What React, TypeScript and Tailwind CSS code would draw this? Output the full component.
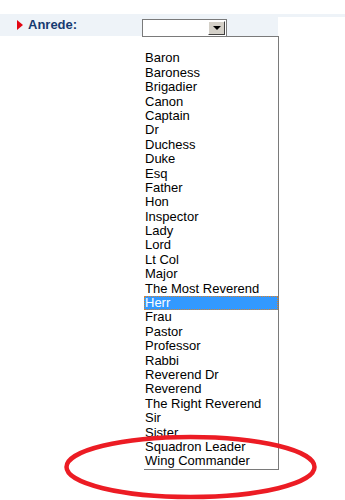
const titles = [
  '',
  'Baron',
  'Baroness',
  'Brigadier',
  'Canon',
  'Captain',
  'Dr',
  'Duchess',
  'Duke',
  'Esq',
  'Father',
  'Hon',
  'Inspector',
  'Lady',
  'Lord',
  'Lt Col',
  'Major',
  'The Most Reverend',
  'Herr',
  'Frau',
  'Pastor',
  'Professor',
  'Rabbi',
  'Reverend Dr',
  'Reverend',
  'The Right Reverend',
  'Sir',
  'Sister',
  'Squadron Leader',
  'Wing Commander',
];

export default function App() {
  return (
    <div className="relative w-[345px] h-[500px] bg-white overflow-hidden font-['Liberation_Sans',Arial,sans-serif]">
      <div className="h-[14px]" />

      {/* Form row */}
      <div className="flex">
        <div className="w-[278px] h-[22px] bg-[#eef3f8] flex items-center">
          <div className="w-[17px]" />
          <div className="w-0 h-0 border-y-[5px] border-y-transparent border-l-[6px] border-l-[#e30613]" />
          <span className="ml-[5px] text-[13px] font-bold text-[#163a70]">Anrede:</span>
        </div>
        <div className="flex-1 h-[3px] bg-[#eef3f8]" />
      </div>

      {/* Select + open list */}
      <div className="absolute left-[142px] top-[19px] w-[137px]">
        <div className="flex">
          <div className="w-[85px] h-[18px] border border-[#7a7a7a] bg-white flex justify-end p-px">
            <div className="w-[17px] h-full bg-[#d4d0c8] border border-t-white border-l-white border-r-[#404040] border-b-[#404040] flex items-center justify-center">
              <div className="w-0 h-0 border-x-[4px] border-x-transparent border-t-[4px] border-t-black" />
            </div>
          </div>
        </div>
        <div className="ml-[2px] border-r border-b border-t border-[#7a7a7a] -mt-px">
          {titles.map((t, i) => (
            <div
              key={i}
              className={
                t === 'Herr'
                  ? 'h-[14.4px] leading-[14px] pl-[1px] text-[13px] bg-[#3399ff] text-white outline outline-1 outline-dotted outline-[#d9822b] -outline-offset-1'
                  : 'h-[14.4px] leading-[14px] pl-[1px] text-[13px] text-black'
              }
            >
              {t}
            </div>
          ))}
        </div>
      </div>

      {/* Red annotation ellipse */}
      <svg className="absolute left-0 top-0" width="345" height="500">
        <ellipse cx="190.5" cy="467" rx="124" ry="30" fill="none" stroke="#ec1c24" strokeWidth="4.5" />
      </svg>
    </div>
  );
}
